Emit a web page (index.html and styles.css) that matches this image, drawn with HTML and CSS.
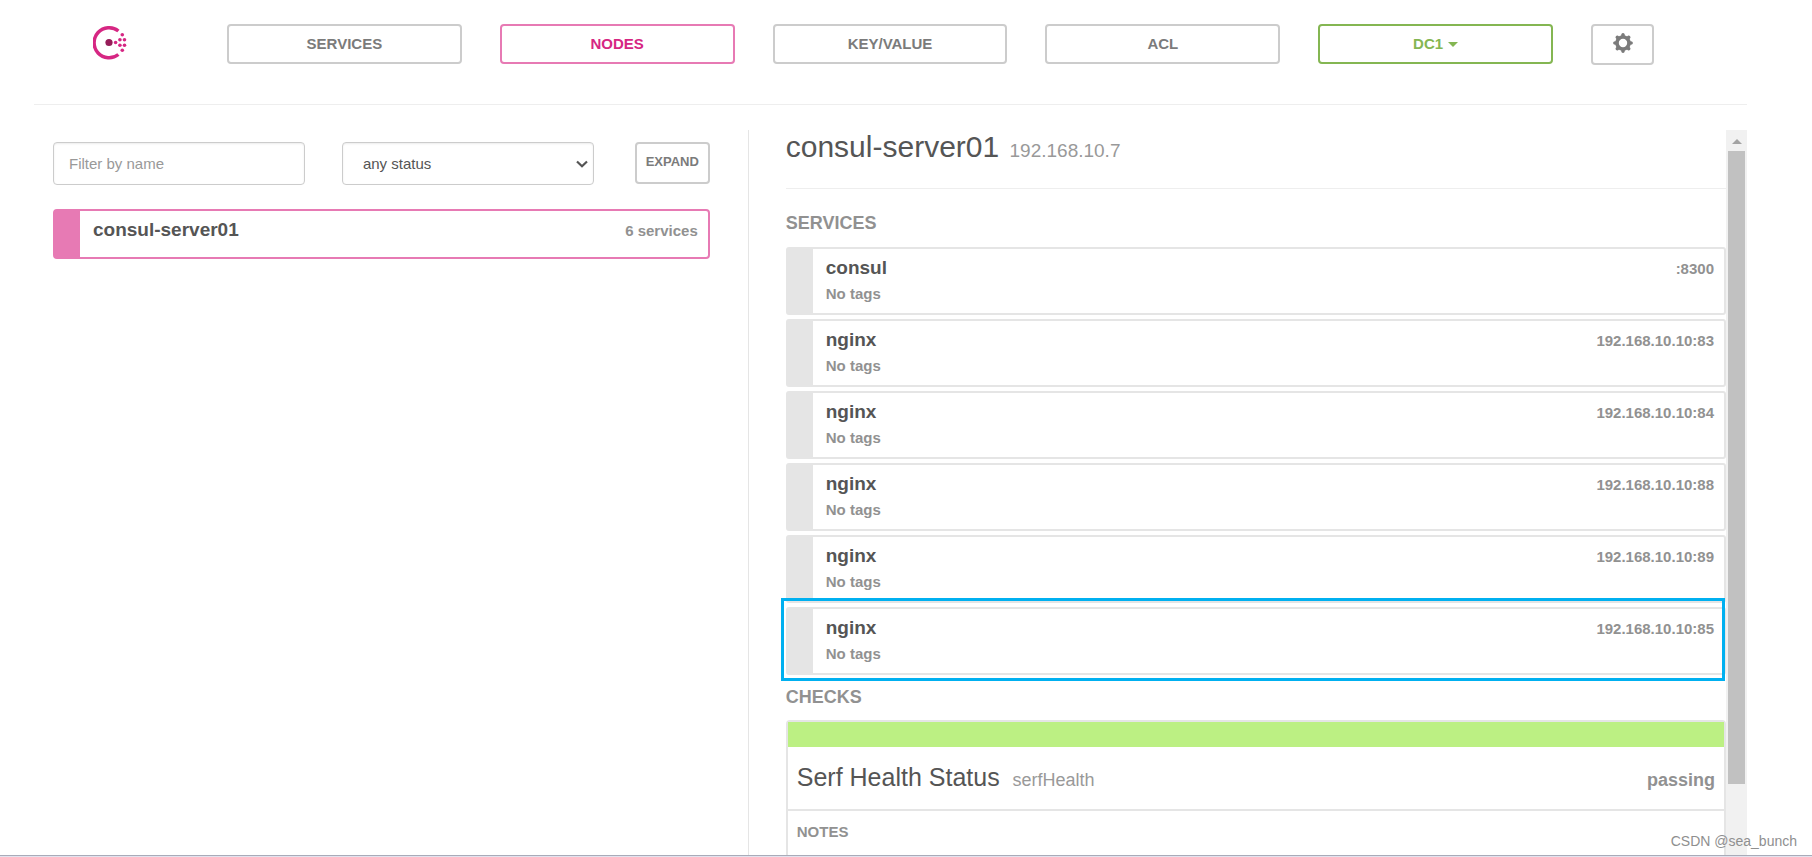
FILE: index.html
```html
<!DOCTYPE html>
<html lang="en">
<head>
<meta charset="utf-8">
<title>Consul</title>
<link rel="stylesheet" href="styles.css">
</head>
<body>
<div class="page">
  <header class="topbar">
    <a class="logo" href="#" aria-label="Consul">
      <svg width="34" height="34" viewBox="0 0 34 34">
        <path d="M25.400 5A15 15 0 1 0 25.400 28.500" fill="none" stroke="#d62783" stroke-width="3.500"/>
        <circle cx="16" cy="16.500" r="3.600" fill="#961d59"/>
        <g fill="#d62783">
          <circle cx="22.600" cy="16.500" r="1.800"/>
          <circle cx="26.900" cy="13.700" r="1.800"/>
          <circle cx="26.900" cy="19.300" r="1.800"/>
          <circle cx="31.500" cy="13.700" r="1.800"/>
          <circle cx="31.500" cy="19.300" r="1.800"/>
          <circle cx="29.300" cy="8.800" r="1.800"/>
          <circle cx="29.300" cy="24.300" r="1.800"/>
        </g>
      </svg>
    </a>
    <a class="btn" href="#services">SERVICES</a>
    <a class="btn btn-active" href="#nodes">NODES</a>
    <a class="btn" href="#kv">KEY/VALUE</a>
    <a class="btn" href="#acl">ACL</a>
    <button class="btn btn-dc" type="button">DC1<span class="caret"></span></button>
    <button class="btn btn-gear" type="button" aria-label="Settings">
      <svg width="20" height="20" viewBox="0 0 20 20">
        <g fill="#7b7b7b">
          <path id="tooth" d="M8 4L8.400 1Q10 -.8 11.600 1L12 4Z"/>
          <use href="#tooth" transform="rotate(45 10 10)"/>
          <use href="#tooth" transform="rotate(90 10 10)"/>
          <use href="#tooth" transform="rotate(135 10 10)"/>
          <use href="#tooth" transform="rotate(180 10 10)"/>
          <use href="#tooth" transform="rotate(225 10 10)"/>
          <use href="#tooth" transform="rotate(270 10 10)"/>
          <use href="#tooth" transform="rotate(315 10 10)"/>
        </g>
        <circle cx="10" cy="10" r="6" fill="none" stroke="#7b7b7b" stroke-width="3.600"/>
      </svg>
    </button>
  </header>

  <main class="columns">
    <section class="nodes">
      <form class="filters">
        <input class="field" type="text" placeholder="Filter by name" aria-label="Filter by name">
        <div class="select-wrap">
          <select class="field field-select" aria-label="Status">
            <option>any status</option>
            <option>passing</option>
            <option>failing</option>
          </select>
          <svg class="chevron" width="12" height="8" viewBox="0 0 12 8"><path d="M1 1.500L6 6.300L11 1.500" fill="none" stroke="#555" stroke-width="2.200"/></svg>
        </div>
        <button class="btn btn-expand" type="button">EXPAND</button>
      </form>
      <a class="item item-node" href="#consul-server01">
        <span class="item-name">consul-server01</span>
        <span class="item-meta">6 services</span>
      </a>
    </section>

    <section class="detail">
      <div class="detail-body">
        <h1 class="node-title">consul-server01 <small class="node-ip">192.168.10.7</small></h1>
        <h2 class="section-title">SERVICES</h2>
        <div class="services">
          <a class="item" href="#consul"><span class="item-name">consul</span><span class="item-meta">:8300</span><span class="item-tags">No tags</span></a>
          <a class="item" href="#n83"><span class="item-name">nginx</span><span class="item-meta">192.168.10.10:83</span><span class="item-tags">No tags</span></a>
          <a class="item" href="#n84"><span class="item-name">nginx</span><span class="item-meta">192.168.10.10:84</span><span class="item-tags">No tags</span></a>
          <a class="item" href="#n88"><span class="item-name">nginx</span><span class="item-meta">192.168.10.10:88</span><span class="item-tags">No tags</span></a>
          <a class="item" href="#n89"><span class="item-name">nginx</span><span class="item-meta">192.168.10.10:89</span><span class="item-tags">No tags</span></a>
          <a class="item item-marked" href="#n85"><span class="item-name">nginx</span><span class="item-meta">192.168.10.10:85</span><span class="item-tags">No tags</span></a>
        </div>
        <h2 class="section-title section-checks">CHECKS</h2>
        <article class="check">
          <div class="check-status"></div>
          <div class="check-head">
            <h3 class="check-title">Serf Health Status <small class="check-id">serfHealth</small></h3>
            <span class="check-state">passing</span>
          </div>
          <div class="check-notes"><h4 class="notes-title">NOTES</h4></div>
        </article>
      </div>
      <div class="scrollbar">
        <span class="scroll-up"></span>
        <div class="scroll-thumb"></div>
      </div>
    </section>
  </main>
  <div class="bottom-edge"></div>
  <span class="watermark">CSDN @sea_bunch</span>
</div>
</body>
</html>
```
FILE: styles.css
```css
* { box-sizing: border-box; }

body {
  margin: 0;
  background: #fff;
  color: #555;
  font-family: "Liberation Sans", Arial, sans-serif;
  font-size: 15px;
}

h1, h2, h3, h4 { margin: 0; }

small { line-height: 1; }

.page {
  position: relative;
  display: flex;
  flex-direction: column;
  height: 100vh;
  overflow: hidden;
}

/* Top navigation */
.topbar {
  display: grid;
  grid-template-columns: 155px repeat(5, 1fr) 63px;
  gap: 38px;
  align-items: start;
  margin: 0 65px 0 34px;
  padding: 24px 93px 39px 0;
  border-bottom: 1px solid #eee;
}

.logo {
  display: block;
  height: 34px;
  margin: 2px 0 0 59px;
}

.btn {
  display: flex;
  align-items: center;
  justify-content: center;
  height: 40px;
  padding: 0 0 2px;
  border: 2px solid #ccc;
  border-radius: 4px;
  background: #fff;
  color: #7b7b7b;
  font-family: inherit;
  font-size: 15px;
  font-weight: bold;
  text-decoration: none;
}

.btn-active { border-color: #e77ab4; color: #d62783; }
.btn-dc { border-color: #84b652; color: #84b652; }
.btn-gear { height: 41px; padding-bottom: 3px; }

.caret {
  margin: 3px 0 0 5px;
  border: 5px solid transparent;
  border-top-color: currentColor;
  border-bottom: 0;
}

/* Two panes */
.columns {
  display: grid;
  grid-template-columns: 5fr 7fr;
  grid-template-rows: minmax(0, 1fr);
  flex: 1;
  min-height: 0;
  margin: 25px 65px 0 34px;
}

.nodes { padding: 12px 38px 0 19px; }

.filters {
  display: grid;
  grid-template-columns: 1fr 1fr 79px;
  gap: 37px;
  margin-bottom: 24px;
}

.field {
  width: 100%;
  height: 43px;
  padding: 0 15px;
  border: 1px solid #ccc;
  border-radius: 4px;
  background: #fff;
  box-shadow: inset 0 1px 2px rgba(0, 0, 0, 0.08);
  color: #555;
  font-family: inherit;
  font-size: 15px;
}

.field::placeholder { color: #999; }
.field-select { padding-left: 20px; appearance: none; }
.select-wrap { position: relative; }
.chevron { position: absolute; right: 6px; top: 18px; }
.btn-expand { height: 42px; margin-left: 4px; padding-bottom: 4px; font-size: 13px; }

/* List entries */
.item {
  display: grid;
  grid-template-columns: 1fr auto;
  align-content: start;
  height: 68px;
  padding: 8px 10px 0 13px;
  border: 2px solid #e5e5e5;
  border-left-width: 27px;
  border-radius: 3px;
  color: #555;
  font-weight: bold;
  text-decoration: none;
}

.item-name { font-size: 19px; line-height: 22px; }
.item-meta { color: #919191; line-height: 24px; }
.item-tags { color: #919191; line-height: 26px; }

.item-node {
  height: 50px;
  border-color: #e77ab4;
  border-radius: 4px;
}

.item-marked { position: relative; }

.item-marked::after {
  content: "";
  position: absolute;
  inset: -11px -1px -8px -32px;
  border: 3px solid #00b0f0;
}

/* Detail pane */
.detail {
  display: grid;
  grid-template-columns: 1fr 21px;
  grid-template-rows: minmax(0, 1fr);
  min-height: 0;
  overflow: hidden;
  border-left: 1px solid #e5e5e5;
}

.detail-body { padding-left: 37px; }

.node-title {
  padding-bottom: 24px;
  border-bottom: 1px solid #eee;
  font-size: 30px;
  font-weight: normal;
  line-height: 34px;
}

.node-ip { margin-left: 2px; color: #999; font-size: 19px; }

.section-title {
  margin: 24px 0 14px;
  color: #919191;
  font-size: 18px;
  line-height: 20px;
}

.section-checks { margin: 12px 0 13px; }
.services { display: grid; gap: 4px; }

.check {
  height: 240px;
  border: 2px solid #e5e5e5;
  border-radius: 4px;
}

.check-status { height: 25px; background: #bcf083; }

.check-head {
  display: flex;
  align-items: baseline;
  justify-content: space-between;
  height: 64px;
  padding: 15px 9px 0;
  border-bottom: 2px solid #e5e5e5;
}

.check-title { font-size: 25px; font-weight: normal; line-height: 30px; }
.check-id { margin-left: 6px; color: #999; font-size: 18px; }
.check-state { color: #919191; font-size: 18px; font-weight: bold; }
.check-notes { padding: 12px 9px; }
.notes-title { color: #919191; font-size: 15px; line-height: 18px; }

/* Scrollbar */
.scrollbar {
  display: flex;
  flex-direction: column;
  align-items: center;
  padding-bottom: 71px;
  background: #f1f1f1;
}

.scroll-up {
  margin: 9px 0 7px;
  border: 5px solid transparent;
  border-top: 0;
  border-bottom-color: #a3a3a3;
}

.scroll-thumb { flex: 1; width: 17px; background: #c1c1c1; }

.bottom-edge {
  height: 2px;
  border-top: 1px solid #a9abb9;
  background: #e2e3ee;
}

.watermark {
  position: absolute;
  right: 15px;
  bottom: 7px;
  color: #8f8f8f;
  font-size: 14px;
  line-height: 18px;
}
```
